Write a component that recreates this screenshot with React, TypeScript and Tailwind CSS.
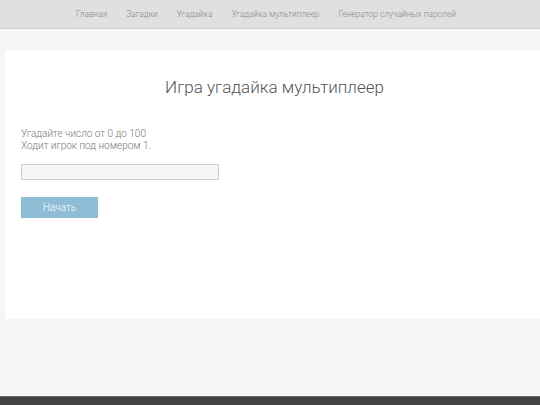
import React from "react";

export default function App() {
  const nav = ["Главная", "Загадки", "Угадайка", "Угадайка мультиплеер", "Генератор случайных паролей"];
  return (
    <div className="w-[540px] h-[405px] overflow-hidden bg-[#f6f6f6] flex flex-col font-['Roboto',sans-serif] font-light">
      <header className="h-[29px] bg-[#e0e0e0] border-b border-[#d2d2d2] flex items-center justify-center pr-[8px] shrink-0">
        <nav className="flex gap-[19px] text-[8.4px] text-[#8a8a8a] leading-none">
          {nav.map((n) => (
            <span key={n}>{n}</span>
          ))}
        </nav>
      </header>
      <div className="mt-[21px] ml-[5px] h-[269px] bg-white px-[16px] shrink-0">
        <h1 className="text-center text-[17px] text-[#555] leading-none pt-[29px] pl-[4px]">Игра угадайка мультиплеер</h1>
        <div className="mt-[32px] text-[10px] leading-[12px] text-[#777]">
          <p>Угадайте число от 0 до 100</p>
          <p>Ходит игрок под номером 1.</p>
        </div>
        <input className="block mt-[12px] w-[198px] h-[16px] border border-[#cfcfcf] bg-[#f5f5f5] outline-none" />
        <button className="block mt-[17px] w-[77px] h-[21px] bg-[#8fbdd6] text-white text-[10px] font-light">Начать</button>
      </div>
      <div className="flex-1" />
      <footer className="h-[9px] bg-[#424345] border-t border-[#666] shrink-0" />
    </div>
  );
}
